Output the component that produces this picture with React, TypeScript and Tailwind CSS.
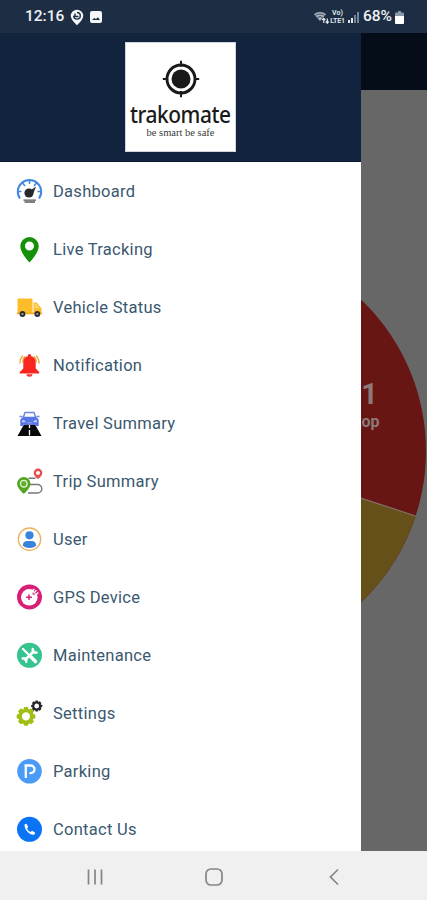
import type { ReactNode } from "react";

const GEAR_TEETH = [0, 45, 90, 135, 180, 225, 270, 315];

const menu: { label: string; icon: ReactNode }[] = [
  { label: "Dashboard", icon: <DashboardIcon /> },
  { label: "Live Tracking", icon: <PinIcon /> },
  { label: "Vehicle Status", icon: <TruckIcon /> },
  { label: "Notification", icon: <BellIcon /> },
  { label: "Travel Summary", icon: <RoadIcon /> },
  { label: "Trip Summary", icon: <TripIcon /> },
  { label: "User", icon: <UserIcon /> },
  { label: "GPS Device", icon: <GpsIcon /> },
  { label: "Maintenance", icon: <ToolsIcon /> },
  { label: "Settings", icon: <GearsIcon /> },
  { label: "Parking", icon: <ParkingIcon /> },
  { label: "Contact Us", icon: <PhoneIcon /> },
];

export default function App() {
  return (
    <div className="flex h-[900px] w-[427px] flex-col overflow-hidden bg-white font-[Roboto,sans-serif]">
      <StatusBar />
      <div className="relative h-[818px] shrink-0 overflow-hidden">
        <Backdrop />
        <aside className="absolute inset-y-0 left-0 w-[361px] overflow-hidden bg-white">
          <div className="flex h-[129px] justify-center border-b border-[#0b1a30] bg-[#12233d] pt-[9px]">
            <Logo />
          </div>
          <nav>
            {menu.map((m) => (
              <a key={m.label} className="flex h-[58px] items-center gap-[10px] pl-4">
                <span className="flex size-[27px] items-center justify-center">{m.icon}</span>
                <span className="pt-[3px] text-[16.5px] tracking-[0.28px] text-[#3a586f]">{m.label}</span>
              </a>
            ))}
          </nav>
        </aside>
      </div>
      <SystemNav />
    </div>
  );
}

function StatusBar() {
  return (
    <header className="flex h-[33px] shrink-0 items-center justify-between bg-[#1d2e44] pt-px pr-[23px] pl-[25px] text-[#eef1f4]">
      <div className="flex items-center">
        <span className="w-[39px] text-[15.5px] font-medium">12:16</span>
        <svg className="ml-[6px] h-[17px] w-[14px]" viewBox="0 0 14 17">
          <path d="M7 .8a6.2 6.2 0 0 0-6.2 6.2C.8 11 7 16.2 7 16.2S13.200 11 13.200 7A6.200 6.200 0 0 0 7 .8z" fill="#f4f6f8" />
          <path d="M5 4.500v3h3.500M7 3.500a3.300 3.300 0 1 1-3.300 3.300" fill="none" stroke="#1d2e44" strokeWidth="1.400" />
        </svg>
        <svg className="ml-[6px] size-[12px]" viewBox="0 0 12 12">
          <rect width="12" height="12" rx="2" fill="#f4f6f8" />
          <path d="M2 9l2.300-2 1.700 1 2-1.700L10 9z" fill="#1d2e44" />
        </svg>
      </div>
      <div className="flex items-center">
        <svg className="h-[14px] w-[17px]" viewBox="0 0 17 14">
          <path d="M1 4.200a9 9 0 0 1 12 0L7 11z" fill="#aab3bf" />
          <path d="M2.500 5.600a7 7 0 0 1 9 0M4.400 7.600a4 4 0 0 1 5.200 0" stroke="#1d2e44" strokeWidth=".8" fill="none" />
          <path d="M10.800 13V8.500M9.300 10l1.500-1.700L12.300 10M14.300 8.500V13M12.800 11.500l1.500 1.700 1.500-1.700" stroke="#e3e7ec" strokeWidth="1.200" fill="none" />
        </svg>
        <span className="flex w-[15px] flex-col items-center text-[7px] leading-[8px] font-bold text-[#dfe4ea]">
          <span>Vo)</span>
          <span className="tracking-[-0.2px]">LTE1</span>
        </span>
        <svg className="ml-[3px] h-[12px] w-[11px]" viewBox="0 0 11 12">
          <path d="M0 9h2v3H0zM3 7h2v5H3z" fill="#e3e7ec" />
          <path d="M6 4h2v8H6zM9 1h2v11H9z" fill="#77849a" />
        </svg>
        <span className="ml-[4px] w-[32px] text-[15.500px] font-medium">68%</span>
        <svg className="h-[13px] w-[9px]" viewBox="0 0 9 13">
          <path d="M3 0h3v2H3z" fill="#8b97a8" />
          <path d="M0 2.500Q0 1.500 1 1.500h7q1 0 1 1V5H0z" fill="#8b97a8" />
          <path d="M0 5h9v7q0 1-1 1H1q-1 0-1-1z" fill="#fff" />
        </svg>
      </div>
    </header>
  );
}

function Backdrop() {
  return (
    <div className="flex h-full flex-col">
      <div className="h-[57px] bg-[#050e18]" />
      <div className="flex-1 bg-[#676767]">
        <svg className="h-[761px] w-[427px]" viewBox="0 90 427 761">
          <circle cx="217" cy="451" r="209" fill="#671613" />
          <path d="M217 451L415.600 516A209 209 0 0 1 217 660z" fill="#66501a" />
          <path d="M217 451L415.600 516" stroke="#86706a" strokeWidth="1.200" />
          <text x="378" y="404" textAnchor="end" fontSize="29" fontWeight="700" fill="#8c7a79">1</text>
          <text x="379.500" y="427" textAnchor="end" fontSize="16" fontWeight="700" fill="#8c7a79">Stop</text>
        </svg>
      </div>
    </div>
  );
}

function Logo() {
  return (
    <div className="flex h-[110px] w-[111px] flex-col items-center border border-[#cfd5dc] bg-white pt-[17px] text-[#1b1a1a]">
      <svg className="size-[38px]" viewBox="0 0 38 38">
        <circle cx="19" cy="19" r="14" fill="none" stroke="currentColor" strokeWidth="2.900" />
        <circle cx="19" cy="19" r="9.500" fill="currentColor" />
        <path d="M19 .8v6M19 31v6.200M.8 19h5M32 19h5.200" stroke="currentColor" strokeWidth="2" />
      </svg>
      <div className="mt-[3px] origin-center scale-x-[0.91] font-['Noto_Sans',sans-serif] text-[23px] leading-[26px] font-medium tracking-[-0.5px]">trakomate</div>
      <div className="h-[12px] font-['Liberation_Serif',serif] text-[10.5px] leading-[12px] text-[#3a3a3a]">be smart be safe</div>
    </div>
  );
}

function SystemNav() {
  return (
    <footer className="flex h-[49px] shrink-0 items-center bg-[#f0f0f0] pt-[2px] pl-[86px] text-[#858585]">
      <svg className="h-[18px] w-[18px]" viewBox="0 0 18 18" fill="none" stroke="currentColor" strokeWidth="1.700">
        <path d="M2.500 1.500v15M9 1.500v15M15.500 1.500v15" />
      </svg>
      <svg className="ml-[101px] size-[18px]" viewBox="0 0 18 18" fill="none" stroke="currentColor" strokeWidth="1.700">
        <rect x="1" y="1" width="16" height="16" rx="5" />
      </svg>
      <svg className="ml-[105px] h-[18px] w-[12px]" viewBox="0 0 12 18" fill="none" stroke="currentColor" strokeWidth="1.700">
        <path d="M10 1.500L2.500 9l7.500 7.500" />
      </svg>
    </footer>
  );
}

function DashboardIcon() {
  return (
    <svg className="size-[27px]" viewBox="0 0 27 27">
      <path d="M4 20.500A11.700 11.700 0 1 1 23 20.500" fill="none" stroke="#4187df" strokeWidth="2" />
      <path d="M13.500 2v4M6.500 5l2.500 3M20.500 5L18 8M2 13.500h3.500M25 13.500h-3.500" stroke="#4187df" strokeWidth="1.500" />
      <circle cx="13" cy="15" r="4.600" fill="#25282c" />
      <path d="M14.500 12.500l5.500-4-2.500 6.500z" fill="#25282c" />
      <path d="M7.500 22.200h12.500M8.500 24h10.500" stroke="#55585c" strokeWidth="1.300" />
    </svg>
  );
}

function PinIcon() {
  return (
    <svg className="size-[27px]" viewBox="0 0 27 27">
      <path fillRule="evenodd" d="M13.500 1A9.200 9.200 0 0 0 4.300 10.200C4.300 17 13.500 26.500 13.500 26.500S22.700 17 22.700 10.200A9.200 9.200 0 0 0 13.500 1zM13.500 5.500a4.500 4.500 0 1 1 0 9 4.500 4.500 0 0 1 0-9z" fill="#159008" />
    </svg>
  );
}

function TruckIcon() {
  return (
    <svg className="size-[27px]" viewBox="0 0 27 27">
      <path d="M2.500 4.500h13q1 0 1 1V20H1.500V5.500q0-1 1-1z" fill="#fdbd28" />
      <path d="M17.500 8.500h3.300l4.700 6V20h-8z" fill="#fdbd28" />
      <path d="M18.500 9.800h1.800l3.300 4.500h-5.100z" fill="#ffd267" />
      <path d="M1 18.500h25v1.800H1z" fill="#f2ad16" />
      <circle cx="6.500" cy="20" r="2.900" fill="#2b2c31" />
      <circle cx="21.300" cy="20" r="2.900" fill="#2b2c31" />
      <circle cx="6.500" cy="20" r="1.100" fill="#a7a7aa" />
      <circle cx="21.300" cy="20" r="1.100" fill="#a7a7aa" />
    </svg>
  );
}

function BellIcon() {
  return (
    <svg className="size-[27px]" viewBox="0 0 27 27">
      <path d="M6.500 4Q3.800 7 4 11M20.500 4q2.700 3 2.500 7M8.800 4.800Q6.800 7 6.800 10M18.200 4.800q2 2.200 2 5.200" fill="none" stroke="#e9a43a" strokeWidth="1.400" strokeLinecap="round" />
      <circle cx="13.500" cy="3.800" r="1.700" fill="#ee2824" />
      <path d="M13.500 4C9 4 7.300 7 7.300 11v5.500L3.800 20v1.500h19.400V20l-3.500-3.500V11c0-4-1.700-7-6.200-7z" fill="#f9261f" />
      <path d="M10.500 22.300h6a3 2.500 0 0 1-6 0z" fill="#ee3531" />
    </svg>
  );
}

function RoadIcon() {
  return (
    <svg className="size-[27px]" viewBox="0 0 27 27">
      <path d="M8 14.500h11L25.500 26h-24z" fill="#08080a" />
      <path d="M13.500 14.500V18M13.500 20v5.500" stroke="#fff" strokeWidth="1.300" />
      <path d="M7.300 7.500L9 2.500h9l1.700 5" fill="#fff" stroke="#6f87ea" strokeWidth="1.500" />
      <path d="M3.500 6.500h3M20.500 6.500h3" stroke="#6f87ea" strokeWidth="1.700" />
      <path d="M4.300 9.500L7 6.800h13L22.700 9.500V16h-3v-1.300H7.300V16h-3z" fill="#5775e5" />
      <path d="M6.500 10.300l2.500.7v1H6.500zM20.500 10.300L18 11v1h2.500zM10.500 12.800h6" fill="#e4eaff" stroke="#b9c6fa" strokeWidth=".6" />
    </svg>
  );
}

function TripIcon() {
  return (
    <svg className="size-[27px]" viewBox="0 0 27 27">
      <path d="M12.500 10.300h7M14 16.500h7.500a4.300 4.300 0 0 1 0 8.600H12" fill="none" stroke="#777" strokeWidth="1.500" />
      <path fillRule="evenodd" d="M22 .6a4.300 4.300 0 0 0-4.300 4.300C17.700 8 22 11 22 11s4.300-3 4.300-6.100A4.300 4.300 0 0 0 22 .6zM22 2.900a2 2 0 1 1 0 4 2 2 0 0 1 0-4z" fill="#e84d50" />
      <path d="M7.800 9A6.700 6.700 0 0 0 1.100 15.700C1.100 20.500 7.800 25.800 7.800 25.800S14.500 20.500 14.500 15.700A6.700 6.700 0 0 0 7.800 9z" fill="#54a51e" />
      <circle cx="7.800" cy="15.700" r="3.300" fill="#63ae2f" stroke="#dff0d1" strokeWidth="1.400" />
    </svg>
  );
}

function UserIcon() {
  return (
    <svg className="size-[27px]" viewBox="0 0 27 27">
      <circle cx="13.500" cy="13.200" r="11.200" fill="#fff" stroke="#edb35c" strokeWidth="1.300" />
      <circle cx="13.500" cy="9.300" r="4.100" fill="#3984da" />
      <path d="M6.800 19.800q0-4.800 4.700-4.800h4q4.700 0 4.700 4.800-2.700 2.200-6.700 2.200t-6.700-2.200z" fill="#3984da" />
    </svg>
  );
}

function GpsIcon() {
  return (
    <svg className="size-[27px]" viewBox="0 0 27 27">
      <circle cx="13.500" cy="13" r="12.500" fill="#d71f78" />
      <circle cx="13.300" cy="13.300" r="8.300" fill="#fff" />
      <path d="M17 10.500L22 4.500" stroke="#d71f78" strokeWidth="2.200" />
      <path d="M15.500 7.500l3-2.500M19.500 11.500l2.800-3M17.500 9.500l3-3.200" stroke="#fff" strokeWidth="1.300" />
      <path d="M13 10.300v5.800M10.100 13.200h5.800" stroke="#d71f78" strokeWidth="1.400" />
    </svg>
  );
}

function ToolsIcon() {
  return (
    <svg className="size-[27px]" viewBox="0 0 27 27">
      <circle cx="13.500" cy="13.300" r="12.500" fill="#35c48d" />
      <path d="M8.500 18.500l10-10" stroke="#fff" strokeWidth="2.700" />
      <path d="M17.200 6.200a3 3 0 0 0 .2 3.600 3 3 0 0 0 4 0M5.800 17.200a3 3 0 0 1 4 0 3 3 0 0 1 0 3.600" fill="none" stroke="#fff" strokeWidth="2.300" />
      <path d="M7 7l5 5" stroke="#fff" strokeWidth="2.300" strokeLinecap="round" />
      <path d="M14.800 14.800l4.700 4.700" stroke="#fff" strokeWidth="3.600" strokeLinecap="round" />
    </svg>
  );
}

function Gear({ cx, cy, r, color }: { cx: number; cy: number; r: number; color: string }) {
  return (
    <g transform={`translate(${cx} ${cy}) scale(${r / 9})`}>
      {GEAR_TEETH.map((a) => (
        <rect key={a} x="-2.2" y="-9" width="4.4" height="4" rx=".8" fill={color} transform={`rotate(${a})`} />
      ))}
      <circle r="5.700" fill="none" stroke={color} strokeWidth="3.600" />
    </g>
  );
}

function GearsIcon() {
  return (
    <svg className="size-[27px]" viewBox="0 0 27 27">
      <Gear cx={10} cy={16.4} r={9.300} color="#a0bf16" />
      <Gear cx={20.7} cy={6} r={5.500} color="#25272c" />
    </svg>
  );
}

function ParkingIcon() {
  return (
    <svg className="size-[27px]" viewBox="0 0 27 27">
      <circle cx="13.500" cy="13.200" r="12.300" fill="#4a9bf5" />
      <path d="M9.800 20V8.200M8.500 7.500h6.200a3.800 3.800 0 0 1 0 7.600h-1.200" fill="none" stroke="#fff" strokeWidth="2.300" />
    </svg>
  );
}

function PhoneIcon() {
  return (
    <svg className="size-[27px]" viewBox="0 0 27 27">
      <circle cx="13.500" cy="13.300" r="12.500" fill="#0a74f5" />
      <path d="M8.600 8.300l1.900-.6 1.700 3.200-1.300 1.500q1.300 2.500 3.700 3.600l1.400-1.300 3.100 1.700-.5 2.100q-2.800 1.200-6.500-2.100-4.200-4-3.500-8.100z" fill="#fff" />
    </svg>
  );
}
